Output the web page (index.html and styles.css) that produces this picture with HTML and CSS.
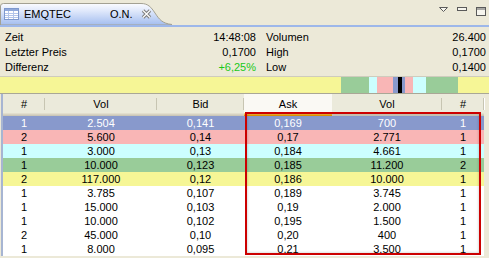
FILE: index.html
```html
<!DOCTYPE html>
<html lang="de">
<head>
    <meta charset="UTF-8" />
    <title>EMQTEC Orderbuch</title>
    <link rel="stylesheet" href="styles.css">
</head>
<body>

<div class="view">
    <!-- Tab bar -->
    <div class="tabbar">
        <div class="tab">
            <svg class="tab-bg" width="172" height="25" viewBox="0 0 172 25">
                <defs>
                    <linearGradient id="tabGrad" x1="0" y1="0" x2="0" y2="1">
                        <stop offset="0" stop-color="#fbfcff"/>
                        <stop offset="0.35" stop-color="#dfe8fb"/>
                        <stop offset="1" stop-color="#a3bdef"/>
                    </linearGradient>
                </defs>
                <path d="M0.5 25 V6 Q0.5 3.5 3.5 3.5 H141 C148 3.5 151 7 155 13 C159 19 162 23.5 172 24.5 V25 Z" fill="url(#tabGrad)" stroke="#a3a193"/>
            </svg>
            <svg class="tab-icon" width="15" height="12" viewBox="0 0 15 12">
                <rect x="0.5" y="0.5" width="14" height="11" fill="#ffffff" stroke="#7d98cd"/>
                <rect x="1" y="1" width="13" height="2" fill="#8fa8da"/>
                <path d="M1 5.5H14M1 7.5H14M1 9.5H14M4.5 3V11M9.5 3V11" stroke="#b3c5ea"/>
            </svg>
            <span class="tab-title">EMQTEC</span>
            <span class="tab-sub">O.N.</span>
            <svg class="tab-close" width="11" height="10" viewBox="0 0 11 10">
                <path d="M2 1.5L9 8.5M9 1.5L2 8.5" stroke="#7f7f7f" stroke-width="3.4"/>
                <path d="M2 1.5L9 8.5M9 1.5L2 8.5" stroke="#ffffff" stroke-width="1.2"/>
            </svg>
        </div>
        <div class="view-tools">
            <svg width="9" height="6" viewBox="0 0 9 6">
                <path d="M0.5 0.5H8.5L4.5 4.5Z" fill="#f6f5ee" stroke="#5a5a5a"/>
            </svg>
            <svg width="10" height="4" viewBox="0 0 10 4">
                <rect x="0.5" y="0.5" width="9" height="3" fill="#f6f5ee" stroke="#5a5a5a"/>
            </svg>
            <svg width="10" height="9" viewBox="0 0 10 9">
                <rect x="0.5" y="0.5" width="9" height="8" fill="#f6f5ee" stroke="#5a5a5a"/>
                <path d="M0 2H10" stroke="#5a5a5a"/>
            </svg>
        </div>
    </div>

    <!-- Quote summary -->
    <div class="info">
        <div class="info-pair"><span>Zeit</span><span>14:48:08</span></div>
        <div class="info-pair"><span>Volumen</span><span>26.400</span></div>
        <div class="info-pair"><span>Letzter Preis</span><span>0,1700</span></div>
        <div class="info-pair"><span>High</span><span>0,1700</span></div>
        <div class="info-pair"><span>Differenz</span><span class="up">+6,25%</span></div>
        <div class="info-pair"><span>Low</span><span>0,1400</span></div>
    </div>

    <!-- Depth bar -->
    <div class="depth-bar">
        <span class="seg yellow" style="width:341px"></span>
        <span class="seg green" style="width:28px"></span>
        <span class="seg cyan" style="width:8px"></span>
        <span class="seg pink" style="width:16px"></span>
        <span class="seg blue" style="width:5px"></span>
        <span class="seg black" style="width:4px"></span>
        <span class="seg blue" style="width:3px"></span>
        <span class="seg pink" style="width:8px"></span>
        <span class="seg cyan" style="width:13px"></span>
        <span class="seg green" style="width:32px"></span>
        <span class="seg yellow" style="width:31px"></span>
    </div>

    <!-- Order book -->
    <div class="book">
        <div class="book-head">
            <div class="head-cell">#</div>
            <div class="head-cell">Vol</div>
            <div class="head-cell">Bid</div>
            <div class="head-cell hot">Ask</div>
            <div class="head-cell">Vol</div>
            <div class="head-cell">#</div>
        </div>
        <div class="book-row blue inverse"><span>1</span><span>2.504</span><span>0,141</span><span>0,169</span><span>700</span><span>1</span></div>
        <div class="book-row pink"><span>2</span><span>5.600</span><span>0,14</span><span>0,17</span><span>2.771</span><span>1</span></div>
        <div class="book-row cyan"><span>1</span><span>3.000</span><span>0,13</span><span>0,184</span><span>4.661</span><span>1</span></div>
        <div class="book-row green"><span>1</span><span>10.000</span><span>0,123</span><span>0,185</span><span>11.200</span><span>2</span></div>
        <div class="book-row yellow"><span>2</span><span>117.000</span><span>0,12</span><span>0,186</span><span>10.000</span><span>1</span></div>
        <div class="book-row"><span>1</span><span>3.785</span><span>0,107</span><span>0,189</span><span>3.745</span><span>1</span></div>
        <div class="book-row"><span>1</span><span>15.000</span><span>0,103</span><span>0,19</span><span>2.000</span><span>1</span></div>
        <div class="book-row"><span>1</span><span>10.000</span><span>0,102</span><span>0,195</span><span>1.500</span><span>1</span></div>
        <div class="book-row"><span>2</span><span>45.000</span><span>0,10</span><span>0,20</span><span>400</span><span>1</span></div>
        <div class="book-row"><span>1</span><span>8.000</span><span>0,095</span><span>0,21</span><span>3.500</span><span>1</span></div>

        <!-- marks the ask side -->
        <div class="ask-mark"></div>
    </div>
</div>

</body>
</html>
```

FILE: styles.css
```css
/* Basic Styles */
body {
    margin: 0;
    background-color: #ece9d8;
    font-family: "Liberation Sans", Arial, sans-serif;
    font-size: 11px;
    color: #000;
}

.view {
    width: 489px;
    height: 258px;
    overflow: hidden;
}

/* Tab bar */
.tabbar {
    display: flex;
    justify-content: space-between;
    height: 25px;
    border-bottom: 2px solid #9db7ea;
}

.tab {
    position: relative;
    width: 172px;
    height: 25px;
    display: flex;
    align-items: center;
    padding-top: 3px;
    box-sizing: border-box;
}

.tab-bg {
    position: absolute;
    left: 0;
    top: 0;
}

.tab-icon,
.tab-title,
.tab-sub,
.tab-close {
    position: relative;
}

.tab-icon {
    margin-left: 4px;
    margin-right: 5px;
}

.tab-title {
    width: 86px;
}

.tab-sub {
    width: 31px;
}

.view-tools {
    display: flex;
    align-items: flex-start;
    gap: 9px;
    padding-top: 7px;
    padding-right: 3px;
}

/* Summary */
.info {
    display: grid;
    grid-template-columns: 251px 220px;
    column-gap: 10px;
    padding: 3px 0 1px 5px;
}

.info-pair {
    display: flex;
    justify-content: space-between;
    line-height: 15px;
}

.up {
    color: #19c819;
}

/* Depth bar */
.depth-bar {
    display: flex;
    height: 16px;
    border-top: 1px solid #cfccbd;
    border-bottom: 1px solid #a9a796;
}

.seg {
    height: 100%;
}

/* Order book */
.book {
    position: relative;
    width: 481px;
    margin-left: 1px;
    border-left: 2px solid #a7b5d2;
}

.book-head,
.book-row {
    display: grid;
    grid-template-columns: 42px 112px 87px 88px 110px 42px;
}

.head-cell {
    position: relative;
    height: 22px;
    line-height: 20px;
    text-align: center;
    background-color: #ebeadb;
    box-shadow: inset 0 -1px #cbc7b8, inset 0 -2px #d6d2c2, inset 0 -3px #e2decd;
}

.head-cell::after {
    content: "";
    position: absolute;
    right: 0;
    top: 4px;
    bottom: 6px;
    width: 1px;
    background-color: #c7c5b2;
    box-shadow: 1px 0 #ffffff;
}

.head-cell.hot {
    background-color: #faf9f4;
    box-shadow: inset 0 -1px #e59700, inset 0 -2px #f8b330, inset 0 -3px #f9cc70;
}

.head-cell.hot::after {
    display: none;
}

.book-row {
    height: 14px;
    line-height: 14px;
    background-color: #ffffff;
    text-align: center;
}

.book-row.inverse {
    color: #ffffff;
}

/* Level colours, shared by depth bar and book rows */
.seg.yellow, .book-row.yellow { background-color: #f6f696; }
.seg.green,  .book-row.green  { background-color: #99cc99; }
.seg.cyan,   .book-row.cyan   { background-color: #ccffff; }
.seg.pink,   .book-row.pink   { background-color: #f9b6b6; }
.seg.blue,   .book-row.blue   { background-color: #8899cc; }
.seg.black { background-color: #000000; }

.ask-mark {
    position: absolute;
    left: 242px;
    top: 18px;
    width: 236px;
    height: 143px;
    box-sizing: border-box;
    border: 2px solid #cc0000;
    box-shadow: inset 0 0 3px rgba(0, 0, 0, 0.25);
}
```
